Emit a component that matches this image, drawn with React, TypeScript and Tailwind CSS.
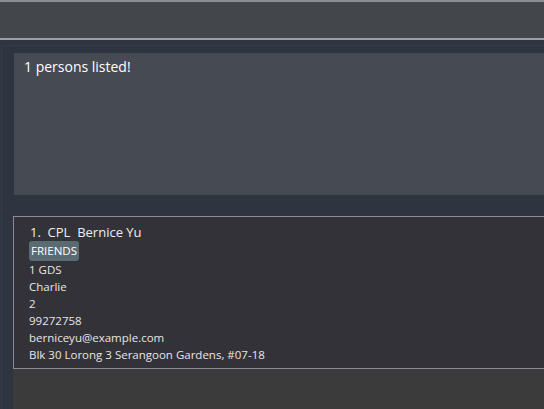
import React from "react";

export default function App() {
  const font = { fontFamily: '"Segoe UI", "Open Sans", "Noto Sans", sans-serif' };
  return (
    <div className="w-[544px] h-[409px] overflow-hidden flex flex-col bg-[#2e3440]" style={font}>
      <div className="h-[2px] bg-[#8d8f96]" />
      <div className="h-[36px] bg-[#43464b]" />
      <div className="h-[2px] bg-[#9a9ea6]" />
      <div className="h-[5px] bg-[#2e3440]" />
      <div className="h-[1px] bg-[#363c48]" />
      <div className="flex-1 flex">
        <div className="w-[13px] flex">
          <div className="w-[1px]" />
          <div className="w-[1px] bg-[#343a46]" />
        </div>
        <div className="flex-1 flex flex-col">
          <div className="h-[7px]" />
          <div className="ml-[1px] h-[142px] bg-[#464a53] px-[10px] pt-[4px]">
            <div className="text-[14px] text-white leading-[20px]">1 persons listed!</div>
          </div>
          <div className="h-[21px]" />
          <div className="flex-1 flex flex-col bg-[#3b3b3b]">
            <div className="h-[153px] border border-r-0 border-[#8d8a93] bg-[#333238] pl-[15px] pt-[6px] text-[#e6e6e6]">
              <div className="text-[13px] leading-[18px] text-[#eeeeee] pl-[1px]">1.&nbsp;&nbsp;CPL&nbsp;&nbsp;Bernice Yu</div>
              <div className="flex">
                <span className="bg-[#5b6b72] text-white text-[11.5px] leading-[20px] px-[2px] rounded-[3px]">FRIENDS</span>
              </div>
              <div className="text-[11.5px] leading-[17px]">
                <div>1 GDS</div>
                <div>Charlie</div>
                <div>2</div>
                <div>99272758</div>
                <div>berniceyu@example.com</div>
                <div>Blk 30 Lorong 3 Serangoon Gardens, #07-18</div>
              </div>
            </div>
          </div>
        </div>
      </div>
    </div>
  );
}
